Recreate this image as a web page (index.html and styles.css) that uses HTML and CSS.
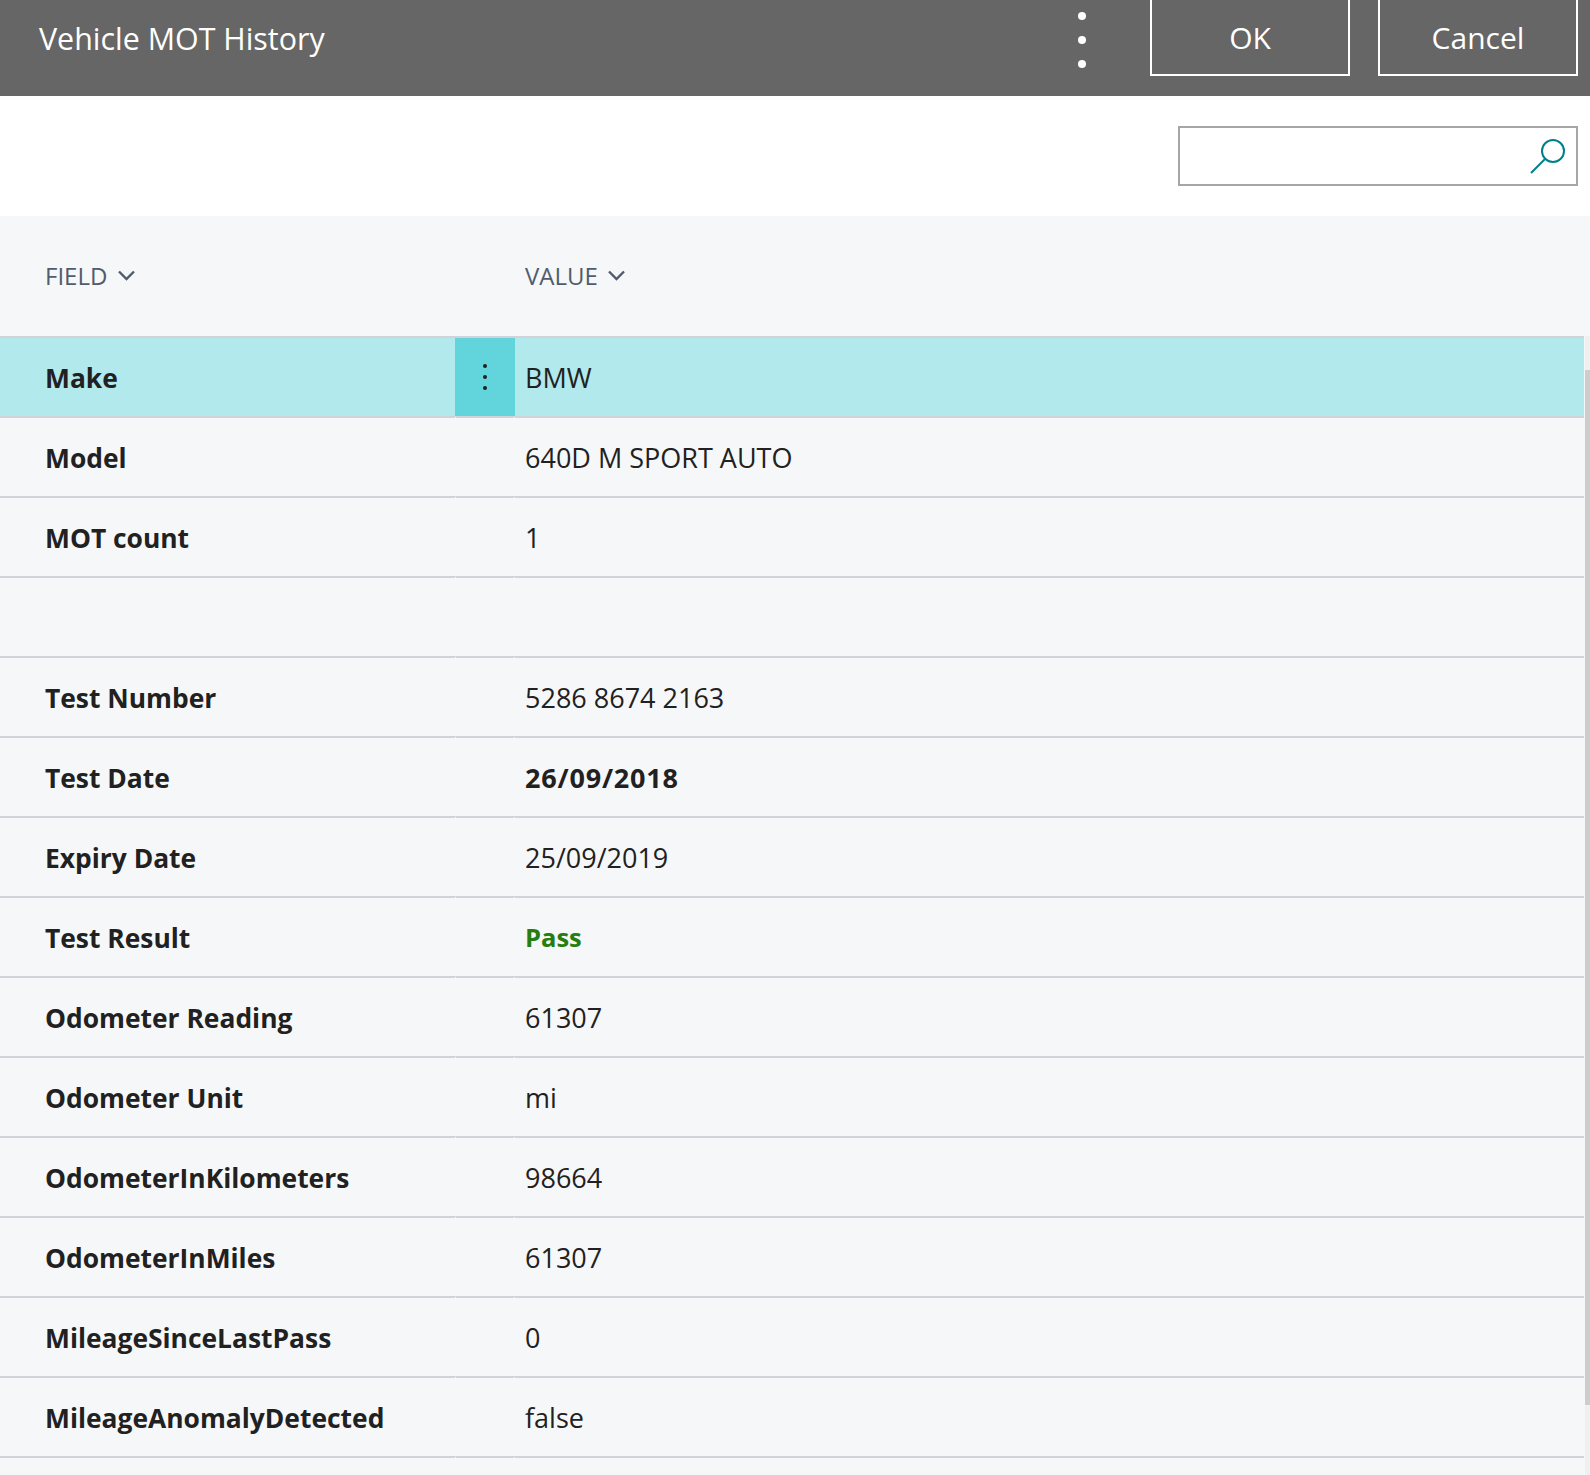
FILE: index.html
```html
<!DOCTYPE html>
<html lang="en">
<head>
<meta charset="utf-8">
<title>Vehicle MOT History</title>
<link rel="stylesheet" href="styles.css">
</head>
<body>
<header class="topbar">
  <h1 class="title">Vehicle MOT History</h1>
  <div class="more"><i></i><i></i><i></i></div>
  <button class="btn ok">OK</button>
  <button class="btn">Cancel</button>
</header>
<div class="searchbar">
  <div class="search">
    <svg class="search-icon" width="36" height="36" viewBox="0 0 36 36"><circle cx="23" cy="13" r="11" fill="none" stroke="#00808a" stroke-width="2"/><path d="M15 21L1 35" fill="none" stroke="#00808a" stroke-width="2"/></svg>
  </div>
</div>
<div class="table">
  <div class="colhead">
    <div class="ch ch-field">FIELD<svg class="chev" width="17" height="11" viewBox="0 0 17 11"><path d="M1 1.5l7.5 7.5 7.5-7.5" fill="none" stroke="#505c6d" stroke-width="2.4"/></svg></div>
    <div class="ch">VALUE<svg class="chev" width="17" height="11" viewBox="0 0 17 11"><path d="M1 1.5l7.5 7.5 7.5-7.5" fill="none" stroke="#505c6d" stroke-width="2.4"/></svg></div>
  </div>
  <div class="body">
    <div class="rows">
      <div class="row selected"><div class="f">Make</div><div class="act"><i></i><i></i><i></i></div><div class="v">BMW</div></div>
      <div class="row"><div class="f">Model</div><div class="act"></div><div class="v">640D M SPORT AUTO</div></div>
      <div class="row"><div class="f">MOT count</div><div class="act"></div><div class="v">1</div></div>
      <div class="row"><div class="f"></div><div class="act"></div><div class="v"></div></div>
      <div class="row"><div class="f">Test Number</div><div class="act"></div><div class="v">5286 8674 2163</div></div>
      <div class="row"><div class="f">Test Date</div><div class="act"></div><div class="v date">26/09/2018</div></div>
      <div class="row"><div class="f">Expiry Date</div><div class="act"></div><div class="v">25/09/2019</div></div>
      <div class="row"><div class="f">Test Result</div><div class="act"></div><div class="v pass">Pass</div></div>
      <div class="row"><div class="f">Odometer Reading</div><div class="act"></div><div class="v">61307</div></div>
      <div class="row"><div class="f">Odometer Unit</div><div class="act"></div><div class="v">mi</div></div>
      <div class="row"><div class="f">OdometerInKilometers</div><div class="act"></div><div class="v">98664</div></div>
      <div class="row"><div class="f">OdometerInMiles</div><div class="act"></div><div class="v">61307</div></div>
      <div class="row"><div class="f">MileageSinceLastPass</div><div class="act"></div><div class="v">0</div></div>
      <div class="row"><div class="f">MileageAnomalyDetected</div><div class="act"></div><div class="v">false</div></div>
    </div>
    <div class="scrollbar"><div class="thumb"></div></div>
  </div>
</div>
</body>
</html>
```
FILE: styles.css
```css
* { box-sizing: border-box; }
html, body { margin: 0; height: 100%; overflow: hidden; }
body { width: 1590px; height: 1475px; background: #f6f7f9; color: #212121; font-family: "Open Sans", "Noto Sans", sans-serif; }
.topbar { height: 96px; background: #666; color: #fff; display: flex; align-items: flex-start; padding: 0 12px 0 39px; }
.title { margin: 0; flex: 1; font-size: 30.4px; font-weight: 400; line-height: 77px; }
.more { width: 60px; height: 76px; margin-right: 38px; padding-top: 12px; display: flex; flex-direction: column; align-items: center; gap: 16px; }
.more i { width: 8px; height: 8px; border-radius: 50%; background: #fff; }
.btn { width: 200px; height: 76px; margin-right: 28px; border: 2px solid #fff; border-top: 0; background: transparent; color: #fff; font: inherit; font-size: 30px; padding: 0; }
.btn:last-child { margin-right: 0; }
.searchbar { height: 120px; background: #fff; display: flex; justify-content: flex-end; padding: 30px 12px 0 0; }
.search { width: 400px; height: 60px; border: 2px solid #a6a6a6; display: flex; justify-content: flex-end; align-items: center; padding-right: 10px; }
.colhead { height: 120px; display: flex; align-items: center; padding-bottom: 2px; }
.ch { display: flex; align-items: center; gap: 10px; font-size: 24px; color: #505c6d; }
.ch-field { width: 525px; padding-left: 45px; gap: 11px; }
.body { display: flex; justify-content: space-between; height: 1139px; overflow: hidden; }
.rows { width: 1584px; border-top: 2px solid #d2d3da; }
.row { height: 80px; display: flex; align-items: center; border-bottom: 2px solid #d2d3da; font-size: 27px; }
.f { width: 455px; padding: 2px 0 0 45px; font-size: 26.4px; font-weight: 700; }
.act { position: relative; width: 60px; height: 78px; display: flex; flex-direction: column; align-items: center; justify-content: center; gap: 7px; }
.act::before, .act::after { content: ""; position: absolute; bottom: -2px; width: 1px; height: 1px; background: #f6f7f9; }
.act::before { left: 0; }
.act::after { right: 0; }
.act i { width: 4px; height: 4px; border-radius: 50%; background: #212121; }
.v { padding-left: 10px; flex: 1; }
.date { font-weight: 700; letter-spacing: 0.8px; }
.pass { font-size: 25.5px; font-weight: 700; color: #267e10; }
.selected { background: #b1e9ec; }
.selected .act { background: #62d4dc; }
.scrollbar { width: 5px; background: #f0f0f0; padding-top: 34px; }
.thumb { height: 1035px; background: #cdcdcd; }
```
